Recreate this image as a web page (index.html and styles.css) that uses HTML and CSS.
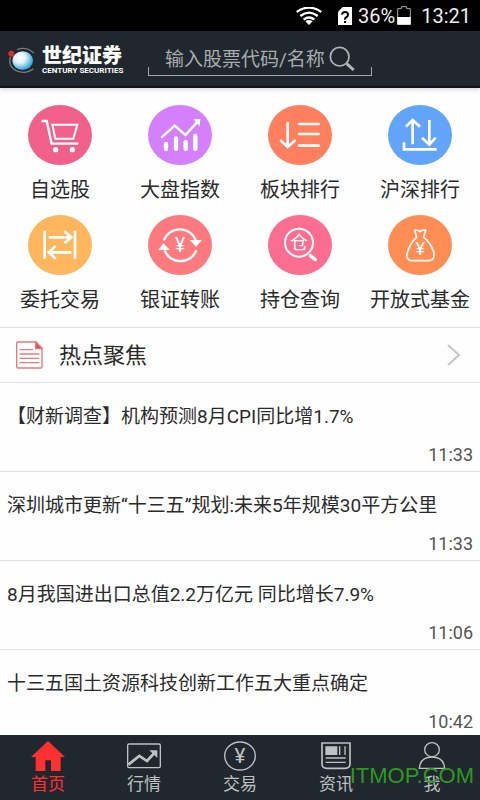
FILE: index.html
```html
<!DOCTYPE html>
<html lang="zh-CN">
<head>
<meta charset="utf-8">
<meta name="viewport" content="width=device-width, initial-scale=1">
<title>世纪证券</title>
<link rel="stylesheet" href="styles.css">
</head>
<body>
<div class="status">
  <svg class="status-wifi" width="26" height="18" viewBox="0 0 78 54" fill="none" stroke="#fff" stroke-width="7">
    <path d="M2 15Q39-11 76 15"/><path d="M13 27Q39 7 65 27"/><path d="M23 38Q39 25 55 38"/><path d="M39 54L28 43Q39 35 50 43Z" fill="#fff" stroke="none"/>
  </svg>
  <svg class="status-sim" width="14" height="18" viewBox="0 0 42 54">
    <path d="M14 0H42V54H0V14Z" fill="#fff"/>
    <path d="M12 23Q13 15 21 15Q30 15 30 23Q30 28 24 31Q21 33 21 38M21 42V48" fill="none" stroke="#000" stroke-width="6"/>
  </svg>
  <span>36%</span>
  <svg class="status-battery" width="14" height="19" viewBox="0 0 42 57">
    <path d="M2 8H13V2H29V8H40V55H2Z" fill="none" stroke="#aaa" stroke-width="3"/><path d="M1 33H41V56H1Z" fill="#fff"/>
  </svg>
  <time>13:21</time>
</div>
<header class="header">
  <a class="brand" href="#">
    <svg width="28" height="27" viewBox="0 0 84 81">
      <defs><radialGradient id="globe" cx=".36" cy=".35" r=".7"><stop offset="0" stop-color="#fff"/><stop offset=".4" stop-color="#def3fb"/><stop offset="1" stop-color="#249bd0"/></radialGradient></defs>
      <path d="M27 8Q55-3 77 18M7 30Q0 58 23 70Q52 84 76 65" fill="none" stroke="#777e82" stroke-width="4"/>
      <ellipse cx="44" cy="41" rx="31" ry="28" fill="url(#globe)"/><circle cx="10" cy="20" r="9" fill="#e02935"/>
    </svg>
    <span class="brand-text"><span class="brand-cn">世纪证券</span><span class="brand-en">CENTURY SECURITIES</span></span>
  </a>
  <form class="search">
    <input class="search-input" type="text" placeholder="输入股票代码/名称" aria-label="输入股票代码/名称">
    <button class="search-button" type="button" aria-label="搜索">
      <svg width="26" height="26" viewBox="0 0 78 78" fill="none" stroke="#b4b8ba"><circle cx="32" cy="32" r="28" stroke-width="5"/><path d="M53 53L74 72" stroke-width="9"/></svg>
    </button>
  </form>
</header>
<main class="main">
  <nav class="shortcuts">
    <a class="shortcut" href="#">
      <svg class="shortcut-icon" viewBox="0 0 192 180"><ellipse cx="96" cy="90" rx="96" ry="90" fill="#f0608a"/>
        <g fill="none" stroke="#fff" stroke-width="7"><path d="M41 48H56L71 116H151"/><path d="M73 59H148L136 101H82Z" stroke-width="6"/></g><circle cx="83" cy="134" r="8" fill="#fff"/><circle cx="133" cy="134" r="8" fill="#fff"/></svg>
      <span>自选股</span></a>
    <a class="shortcut" href="#">
      <svg class="shortcut-icon" viewBox="0 0 192 180"><ellipse cx="96" cy="90" rx="96" ry="90" fill="#d480fc"/>
        <path d="M40 98L80 62L112 90L149 50" fill="none" stroke="#fff" stroke-width="7"/><path d="M136 43L157 42L155 64Z" fill="#fff"/>
        <path d="M54 117V132M84 100V132M113 111V132M142 93V132" stroke="#fff" stroke-width="13" stroke-linecap="round"/></svg>
      <span>大盘指数</span></a>
    <a class="shortcut" href="#">
      <svg class="shortcut-icon" viewBox="0 0 192 180"><ellipse cx="96" cy="90" rx="96" ry="90" fill="#ff7f5e"/>
        <path d="M59 54V126M39 107L59 126L80 107M93 57H152M93 87H152M93 122H152" fill="none" stroke="#fff" stroke-width="8" stroke-linecap="round"/></svg>
      <span>板块排行</span></a>
    <a class="shortcut" href="#">
      <svg class="shortcut-icon" viewBox="0 0 192 180"><ellipse cx="96" cy="90" rx="96" ry="90" fill="#62a4fa"/>
        <path d="M74 118V46M54 65L74 45L96 65M124 45V119M102 98L124 119L143 98M48 112V133H146" fill="none" stroke="#fff" stroke-width="8"/></svg>
      <span>沪深排行</span></a>
    <a class="shortcut" href="#">
      <svg class="shortcut-icon" viewBox="0 0 192 180"><ellipse cx="96" cy="90" rx="96" ry="90" fill="#ffb65c"/>
        <path d="M50 47V131M141 47V131M62 67H129M109 49L130 67L109 85M130 112H64M83 93L62 112L83 131" fill="none" stroke="#fff" stroke-width="8"/></svg>
      <span>委托交易</span></a>
    <a class="shortcut" href="#">
      <svg class="shortcut-icon" viewBox="0 0 192 180"><ellipse cx="96" cy="90" rx="96" ry="90" fill="#ff7a7e"/>
        <path d="M48 76A50 48 0 0 1 143 76M50 106A50 48 0 0 0 145 105" fill="none" stroke="#fff" stroke-width="7"/><path d="M125 75H162L144 95ZM31 105H66L46 85Z" fill="#fff"/>
        <text class="glyph-yen" x="96" y="110" font-size="58">¥</text></svg>
      <span>银证转账</span></a>
    <a class="shortcut" href="#">
      <svg class="shortcut-icon" viewBox="0 0 192 180"><ellipse cx="96" cy="90" rx="96" ry="90" fill="#fd6d8f"/>
        <circle cx="93" cy="83" r="42" fill="none" stroke="#fff" stroke-width="6"/><path d="M127 122L142 134" stroke="#fff" stroke-width="10" stroke-linecap="round"/>
        <text class="glyph-cn" x="93" y="102" font-size="54">仓</text></svg>
      <span>持仓查询</span></a>
    <a class="shortcut" href="#">
      <svg class="shortcut-icon" viewBox="0 0 192 180"><ellipse cx="96" cy="90" rx="96" ry="90" fill="#ff8d54"/>
        <path d="M86 67L80 46Q89 44 96 50Q104 43 113 45L107 67Q126 80 137 110Q143 137 120 137H74Q52 137 58 113Q66 83 86 67Z" fill="none" stroke="#fff" stroke-width="5" stroke-linejoin="round"/>
        <text class="glyph-yen" x="97" y="121" font-size="54">¥</text></svg>
      <span>开放式基金</span></a>
  </nav>
  <section>
    <h2 class="focus"><a class="focus-link" href="#">
      <svg width="27" height="28" viewBox="0 0 81 84" fill="none" stroke="#e77a7e" stroke-width="4"><path d="M5 3H60L78 22V77Q78 81 74 81H6Q2 81 2 77V6Q2 3 5 3Z"/><path d="M59 3V23H79Z" fill="#d94a50"/><path d="M11 26H51M11 39H70M11 52H70M11 65H70"/></svg>
      <span class="focus-title">热点聚焦</span>
      <svg width="14" height="22" viewBox="0 0 14 22" fill="none" stroke="#c4c4c4" stroke-width="2"><path d="M1 1L12 11L1 21"/></svg>
    </a></h2>
    <ul class="news">
      <li><a class="news-item" href="#"><span class="news-title">【财新调查】机构预测8月CPI同比增1.7%</span><time class="news-time">11:33</time></a></li>
      <li><a class="news-item" href="#"><span class="news-title">深圳城市更新“十三五”规划:未来5年规模30平方公里</span><time class="news-time">11:33</time></a></li>
      <li><a class="news-item" href="#"><span class="news-title">8月我国进出口总值2.2万亿元 同比增长7.9%</span><time class="news-time">11:06</time></a></li>
      <li><a class="news-item" href="#"><span class="news-title">十三五国土资源科技创新工作五大重点确定</span><time class="news-time">10:42</time></a></li>
    </ul>
  </section>
</main>
<nav class="tabs">
  <a class="tab tab-active" href="#"><svg width="34" height="30" viewBox="0 0 102 90"><path d="M51 0L102 48H89V90H60V58H43V90H14V48H0Z" fill="currentColor"/></svg><span>首页</span></a>
  <a class="tab" href="#"><svg width="34" height="30" viewBox="0 0 102 90" fill="none" stroke="currentColor"><rect x="2" y="9" width="98" height="71" rx="4" stroke-width="4"/><path d="M4 71L37 45L60 60L82 36" stroke-width="8"/><path d="M67 28H91V51Z" fill="currentColor" stroke="none"/></svg><span>行情</span></a>
  <a class="tab" href="#"><svg width="34" height="30" viewBox="0 0 102 90"><ellipse cx="51" cy="45" rx="46" ry="42" fill="none" stroke="currentColor" stroke-width="4"/><text class="tab-yen" x="51" y="67" font-size="62">¥</text></svg><span>交易</span></a>
  <a class="tab" href="#"><svg width="34" height="30" viewBox="0 0 102 90" fill="none" stroke="currentColor" stroke-width="4"><path d="M9 6H93V69Q93 82 78 82H24Q9 82 9 69Z" stroke-width="5"/><path d="M21 18H53V40H21Z" fill="currentColor"/><path d="M62 16V42M78 16V42M20 51H80M20 64H80"/></svg><span>资讯</span></a>
  <a class="tab" href="#"><svg width="34" height="30" viewBox="0 0 102 90" fill="none" stroke="currentColor" stroke-width="4"><ellipse cx="51" cy="26" rx="22" ry="21"/><path d="M13 82Q16 48 51 48Q86 48 89 82Z"/></svg><span>我</span></a>
  <span class="watermark">ITMOP.COM</span>
</nav>
</body>
</html>
```
FILE: styles.css
```css
* {
  box-sizing: border-box;
}

body {
  display: flex;
  flex-direction: column;
  height: 100vh;
  margin: 0;
  background: #fefefe;
  color: #2b2b2b;
  font-family: Roboto, "Noto Sans CJK SC", sans-serif;
}

a {
  color: inherit;
  text-decoration: none;
}

svg {
  display: block;
  flex: none;
}

.status {
  display: flex;
  flex: none;
  align-items: center;
  justify-content: flex-end;
  height: 31px;
  padding-right: 9px;
  background: #000;
  color: #eee;
  font-size: 20px;
}

.status-wifi {
  margin-right: 16px;
}

.status-sim {
  margin-right: 6px;
}

.status-battery {
  margin: 0 10px 0 2px;
}

.header {
  display: flex;
  flex: none;
  align-items: center;
  height: 57px;
  padding-left: 8px;
  border-bottom: 2px solid #12171b;
  background: #20272e;
  box-shadow: 0 1px 5px rgba(0, 0, 0, 0.2);
}

.brand {
  display: flex;
  align-items: center;
  gap: 6px;
  width: 140px;
  padding-top: 4px;
  color: #fff;
}

.brand-text {
  display: flex;
  flex-direction: column;
  white-space: nowrap;
}

.brand-cn {
  font-size: 20px;
  font-weight: 900;
  line-height: 20px;
}

.brand-en {
  font-size: 8px;
  font-weight: 700;
  line-height: 9px;
}

.search {
  display: flex;
  align-items: center;
  flex: 1;
  height: 34px;
  margin-right: 108px;
  padding-left: 17px;
  background:
    linear-gradient(#a3a8ab, #a3a8ab) left bottom / 1px 9px no-repeat,
    linear-gradient(#a3a8ab, #a3a8ab) right bottom / 1px 9px no-repeat,
    linear-gradient(#a3a8ab, #a3a8ab) left bottom / 100% 1px no-repeat;
}

.search-input {
  width: 164px;
  padding: 2px 0 0;
  border: 0;
  outline: 0;
  background: none;
  color: #b4b8ba;
  font: inherit;
  font-size: 19px;
}

.search-input::placeholder {
  color: #a9adb0;
}

.search-button {
  padding: 0;
  border: 0;
  background: none;
}

.main {
  flex: 1;
  min-height: 0;
  overflow: hidden;
}

.shortcuts {
  display: grid;
  grid-template-columns: repeat(4, 1fr);
  gap: 10px 0;
  padding: 17px 0 12px;
}

.shortcut {
  display: flex;
  flex-direction: column;
  align-items: center;
  gap: 10px;
  font-size: 20px;
  line-height: 30px;
  white-space: nowrap;
}

.shortcut-icon {
  width: 64px;
  height: 60px;
}

.glyph-yen,
.glyph-cn {
  fill: #fff;
  text-anchor: middle;
}

.focus {
  margin: 0;
  border-top: 1px solid #e0e0e0;
  border-bottom: 1px solid #e0e0e0;
  font-size: 22px;
  font-weight: 400;
}

.focus-link {
  display: flex;
  align-items: center;
  height: 54px;
  padding: 0 19px 0 16px;
}

.focus-title {
  flex: 1;
  padding: 0 0 4px 16px;
}

.news {
  margin: 0;
  padding: 0;
  list-style: none;
}

.news-item {
  display: flex;
  flex-direction: column;
  justify-content: space-between;
  height: 89px;
  padding: 21px 7px 3px;
  border-bottom: 1px solid #e0e0e0;
  line-height: 26px;
}

.news-title {
  font-size: 19px;
  white-space: nowrap;
}

.news-time {
  align-self: flex-end;
  color: #555;
  font-size: 18px;
}

.tabs {
  position: relative;
  display: flex;
  flex: none;
  height: 65px;
  padding-top: 6px;
  background: #20272e;
  color: #bfc2c4;
}

.tab {
  display: flex;
  flex: 1;
  flex-direction: column;
  align-items: center;
  font-size: 17px;
  line-height: 26px;
}

.tab-active {
  color: #ff3030;
}

.tab-yen {
  fill: currentColor;
  text-anchor: middle;
}

.watermark {
  position: absolute;
  right: 6px;
  bottom: 12px;
  color: #2e9a20;
  font-family: "Liberation Sans", sans-serif;
  font-size: 22px;
  line-height: 24px;
}
```
